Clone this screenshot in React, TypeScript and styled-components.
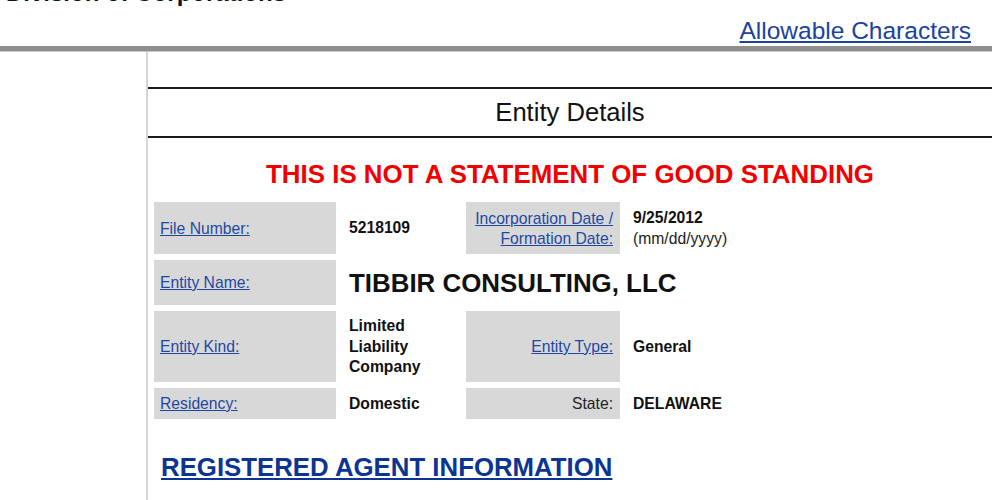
import React from "react";
import styled, { createGlobalStyle } from "styled-components";

const GlobalStyle = createGlobalStyle`
  html, body {
    margin: 0;
    padding: 0;
    background: #ffffff;
    font-family: "Liberation Sans", Arial, Helvetica, sans-serif;
    overflow: hidden;
  }
`;

const Page = styled.div`
  width: 992px;
  height: 500px;
  overflow: hidden;
  display: flex;
  flex-direction: column;
`;

const TopBar = styled.header`
  height: 46px;
  display: flex;
  flex-direction: column;
  overflow: hidden;
`;

const SiteTitle = styled.div`
  margin: -19px 0 0 6px;
  font-size: 24px;
  line-height: 24px;
  font-weight: bold;
  color: #111111;
  white-space: nowrap;
`;

const LinkRow = styled.div`
  margin-top: 13px;
  padding-right: 21px;
  text-align: right;
  font-size: 24.5px;
  line-height: 26px;
`;

const TopLink = styled.a`
  color: #1b43a0;
  text-decoration: underline;
`;

const Rule = styled.div`
  height: 5px;
  background: #8e8e8e;
  border-bottom: 1px solid #c6c6c6;
`;

const Main = styled.main`
  flex: 1;
  display: flex;
`;

const Side = styled.aside`
  width: 146px;
  flex-shrink: 0;
`;

const Content = styled.section`
  flex: 1;
  border-left: 2px solid #d6d6d6;
  padding-top: 35px;
  display: flex;
  flex-direction: column;
`;

const TitleBand = styled.h1`
  margin: 0;
  height: 47px;
  border-top: 2px solid #1c1c1c;
  border-bottom: 2px solid #1c1c1c;
  text-align: center;
  font-size: 25.6px;
  line-height: 47px;
  font-weight: normal;
  color: #111111;
`;

const Warning = styled.h2`
  margin: 21px 0 0;
  text-align: center;
  font-size: 25.9px;
  line-height: 30px;
  font-weight: bold;
  color: #f20000;
`;

const DetailGrid = styled.div`
  margin: 13px 0 0 6px;
  display: grid;
  grid-template-columns: 182px 118px 154px 1fr;
  grid-template-rows: 52px 45px 71px 31px;
  gap: 6px;
`;

const LabelCell = styled.div<{ $right?: boolean }>`
  background: #d8d8d8;
  display: flex;
  align-items: center;
  justify-content: ${(p) => (p.$right ? "flex-end" : "flex-start")};
  text-align: ${(p) => (p.$right ? "right" : "left")};
  padding: ${(p) => (p.$right ? "1px 7px 0 6px" : "1px 6px 0")};
  font-size: 15.7px;
  line-height: 20px;
  color: #222222;
`;

const LabelLink = styled.a`
  color: #1f48a3;
  text-decoration: underline;
`;

const ValueCell = styled.div<{ $span?: boolean; $big?: boolean }>`
  display: flex;
  flex-direction: column;
  justify-content: center;
  padding: 1px 7px 0;
  grid-column: ${(p) => (p.$span ? "2 / 5" : "auto")};
  font-size: ${(p) => (p.$big ? "25.9px" : "15.7px")};
  line-height: ${(p) => (p.$big ? "30px" : "20.5px")};
  font-weight: bold;
  color: #111111;
`;

const Note = styled.span`
  font-weight: normal;
  color: #222222;
`;

const SectionLink = styled.a`
  display: block;
  margin: 33px 0 0 13px;
  font-size: 25.8px;
  line-height: 30px;
  font-weight: bold;
  color: #0c3593;
  text-decoration: underline;
  align-self: flex-start;
`;

export default function App() {
  return (
    <Page>
      <GlobalStyle />
      <TopBar>
        <SiteTitle>Division of Corporations</SiteTitle>
        <LinkRow>
          <TopLink href="#">Allowable Characters</TopLink>
        </LinkRow>
      </TopBar>
      <Rule />
      <Main>
        <Side />
        <Content>
          <TitleBand>Entity Details</TitleBand>
          <Warning>THIS IS NOT A STATEMENT OF GOOD STANDING</Warning>
          <DetailGrid>
            <LabelCell>
              <LabelLink href="#">File Number:</LabelLink>
            </LabelCell>
            <ValueCell>5218109</ValueCell>
            <LabelCell $right>
              <LabelLink href="#">
                Incorporation Date /<br />
                Formation Date:
              </LabelLink>
            </LabelCell>
            <ValueCell>
              <span>9/25/2012</span>
              <Note>(mm/dd/yyyy)</Note>
            </ValueCell>

            <LabelCell>
              <LabelLink href="#">Entity Name:</LabelLink>
            </LabelCell>
            <ValueCell $span $big>
              TIBBIR CONSULTING, LLC
            </ValueCell>

            <LabelCell>
              <LabelLink href="#">Entity Kind:</LabelLink>
            </LabelCell>
            <ValueCell>Limited Liability Company</ValueCell>
            <LabelCell $right>
              <LabelLink href="#">Entity Type:</LabelLink>
            </LabelCell>
            <ValueCell>General</ValueCell>

            <LabelCell>
              <LabelLink href="#">Residency:</LabelLink>
            </LabelCell>
            <ValueCell>Domestic</ValueCell>
            <LabelCell $right>State:</LabelCell>
            <ValueCell>DELAWARE</ValueCell>
          </DetailGrid>
          <SectionLink href="#">REGISTERED AGENT INFORMATION</SectionLink>
        </Content>
      </Main>
    </Page>
  );
}
